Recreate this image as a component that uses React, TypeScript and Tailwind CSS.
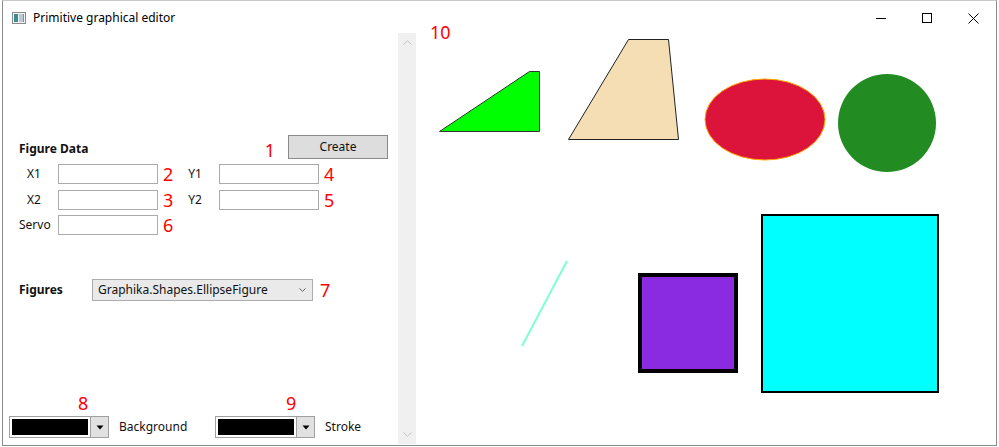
import { ReactNode } from "react";

const font = { fontFamily: '"Noto Sans", "Open Sans", sans-serif' };

const Mark = ({ n, className = "" }: { n: string; className?: string }) => (
  <span className={`block text-[18px] leading-none text-[#ff0000] ${className}`}>{n}</span>
);

const Field = ({ label, mark }: { label: string; mark: string }) => (
  <div className="flex h-[20px] items-center leading-none">
    <span className="w-[30px] text-center text-[12px] text-[#111]">{label}</span>
    <div className="ml-[9px] h-[20px] w-[100px] border border-[#ababab] bg-white" />
    <span className="w-[22px] pl-[5px]">
      <Mark n={mark} />
    </span>
  </div>
);

const Row = ({ children, className = "" }: { children: ReactNode; className?: string }) => (
  <div className={`flex items-center pl-[16px] leading-none ${className}`}>{children}</div>
);

const ColorPick = ({ mark, label, markLeft }: { mark: string; label: string; markLeft: string }) => (
  <div className="flex flex-col leading-none">
    <Mark n={mark} className={`mb-[4px] ${markLeft}`} />
    <div className="flex items-center">
      <div className="flex h-[22px] w-[100px] border border-[#a0a0a0] bg-white">
        <div className="m-[2px] flex-1 bg-black" />
        <div className="flex w-[18px] items-center justify-center border-l border-[#a0a0a0] bg-[#e1e1e1]">
          <svg width="8" height="5" viewBox="0 0 8 5">
            <path d="M0.5 0.5 L7.5 0.5 L4 4.5 Z" fill="#000" />
          </svg>
        </div>
      </div>
      <span className="ml-[10px] text-[12px] text-[#111]">{label}</span>
    </div>
  </div>
);

const Chevron = ({ up }: { up?: boolean }) => (
  <svg width="9" height="5" viewBox="0 0 9 5">
    <path
      d={up ? "M0.5 4.5 L4.5 0.8 L8.5 4.5" : "M0.5 0.5 L4.5 4.2 L8.5 0.5"}
      fill="none"
      stroke="#c2c2c2"
      strokeWidth="1"
    />
  </svg>
);

export default function App() {
  return (
    <div className="relative h-[447px] w-[999px] overflow-hidden bg-white" style={font}>
      <div className="ml-[2px] flex h-[446px] w-[995px] flex-col border border-[#8c8c8c] border-t-[#c8c8c8]">
        {/* title bar */}
        <div className="flex h-[31px] items-center bg-white pt-[3px]">
          <div className="ml-[9px] flex h-[12px] w-[14px] border border-[#8a8a8a] bg-[#f4f4f4]">
            <div className="m-[1px] w-[4px] bg-[#3a8f8a]" />
            <div className="my-[1px] w-[5px] bg-[#b9c9d6]" />
            <div className="my-[1px] ml-auto mr-[1px] w-[1px] bg-[#5aa0a0]" />
          </div>
          <span className="ml-[7px] text-[12px] text-black">Primitive graphical editor</span>
          <div className="ml-auto flex h-full">
            <div className="flex w-[46px] items-center justify-center">
              <svg width="10" height="10" viewBox="0 0 10 10">
                <path d="M0 5.5 H10" stroke="#000" strokeWidth="1" />
              </svg>
            </div>
            <div className="flex w-[46px] items-center justify-center">
              <svg width="10" height="10" viewBox="0 0 10 10">
                <rect x="0.5" y="0.5" width="9" height="9" fill="none" stroke="#000" strokeWidth="1" />
              </svg>
            </div>
            <div className="flex w-[46px] items-center justify-center">
              <svg width="11" height="11" viewBox="0 0 11 11">
                <path d="M0.5 0.5 L10.5 10.5 M10.5 0.5 L0.5 10.5" stroke="#000" strokeWidth="1" />
              </svg>
            </div>
          </div>
        </div>

        {/* client */}
        <div className="flex flex-1">
          <div className="flex w-[395px] flex-col pt-[103px] pb-[7px]">
            <div className="flex h-[24px] items-center leading-none">
              <span className="flex-1 pl-[16px] pt-[4px] text-[12px] font-bold text-[#111]">Figure Data</span>
              <Mark n="1" className="mr-[13px] pt-[5px]" />
              <button className="mr-[10px] h-[24px] w-[100px] border border-[#8a8a8a] bg-[#dddddd] text-[12px] text-[#111]">
                Create
              </button>
            </div>
            <Row className="mt-[5px]">
              <Field label="X1" mark="2" />
              <Field label="Y1" mark="4" />
            </Row>
            <Row className="mt-[6px]">
              <Field label="X2" mark="3" />
              <Field label="Y2" mark="5" />
            </Row>
            <Row className="mt-[5px]">
              <Field label="Servo" mark="6" />
            </Row>
            <Row className="mt-[44px]">
              <span className="w-[73px] text-[12px] font-bold text-[#111]">Figures</span>
              <div className="flex h-[22px] w-[221px] items-center border border-[#acacac] bg-[#eaeaea] pl-[5px] pr-[6px]">
                <span className="flex-1 text-[12px] text-[#111]">Graphika.Shapes.EllipseFigure</span>
                <svg width="7" height="4" viewBox="0 0 7 4">
                  <path d="M0.5 0.5 L3.5 3.3 L6.5 0.5" fill="none" stroke="#606060" strokeWidth="1" />
                </svg>
              </div>
              <Mark n="7" className="ml-[7px]" />
            </Row>
            <div className="mt-auto flex pl-[6px]">
              <div className="w-[206px]">
                <ColorPick mark="8" label="Background" markLeft="ml-[69px]" />
              </div>
              <ColorPick mark="9" label="Stroke" markLeft="ml-[71px]" />
            </div>
          </div>

          {/* scrollbar */}
          <div className="my-[1px] flex w-[18px] flex-col items-center justify-between bg-[#f0f0f0] py-[7px]">
            <Chevron up />
            <Chevron />
          </div>

          {/* canvas */}
          <div className="relative flex-1 bg-white">
            <svg width="579" height="413" viewBox="0 0 579 413" className="block">
              <polygon points="23.5,99.5 113.5,39.5 123.5,39.5 123.5,99.5" fill="#00ff00" stroke="#333" strokeWidth="1" />
              <polygon points="152.5,107.5 212.5,7.5 252.5,7.5 262.5,107.5" fill="#f5deb3" stroke="#222" strokeWidth="1" />
              <ellipse cx="349" cy="87.5" rx="60" ry="40.5" fill="#dc143c" stroke="#ffa500" strokeWidth="1" />
              <circle cx="471" cy="91" r="49" fill="#228b22" />
              <line x1="106" y1="314" x2="151" y2="229" stroke="#7fffd4" strokeWidth="2" />
              <rect x="224" y="243" width="96" height="96" fill="#8a2be2" stroke="#000" strokeWidth="4" />
              <rect x="346" y="183" width="176" height="177" fill="#00ffff" stroke="#000" strokeWidth="2" />
            </svg>
          </div>
        </div>
      </div>
      <span className="absolute left-[430px] top-[23px] text-[18px] leading-none text-[#ff0000]" style={font}>
        10
      </span>
    </div>
  );
}
